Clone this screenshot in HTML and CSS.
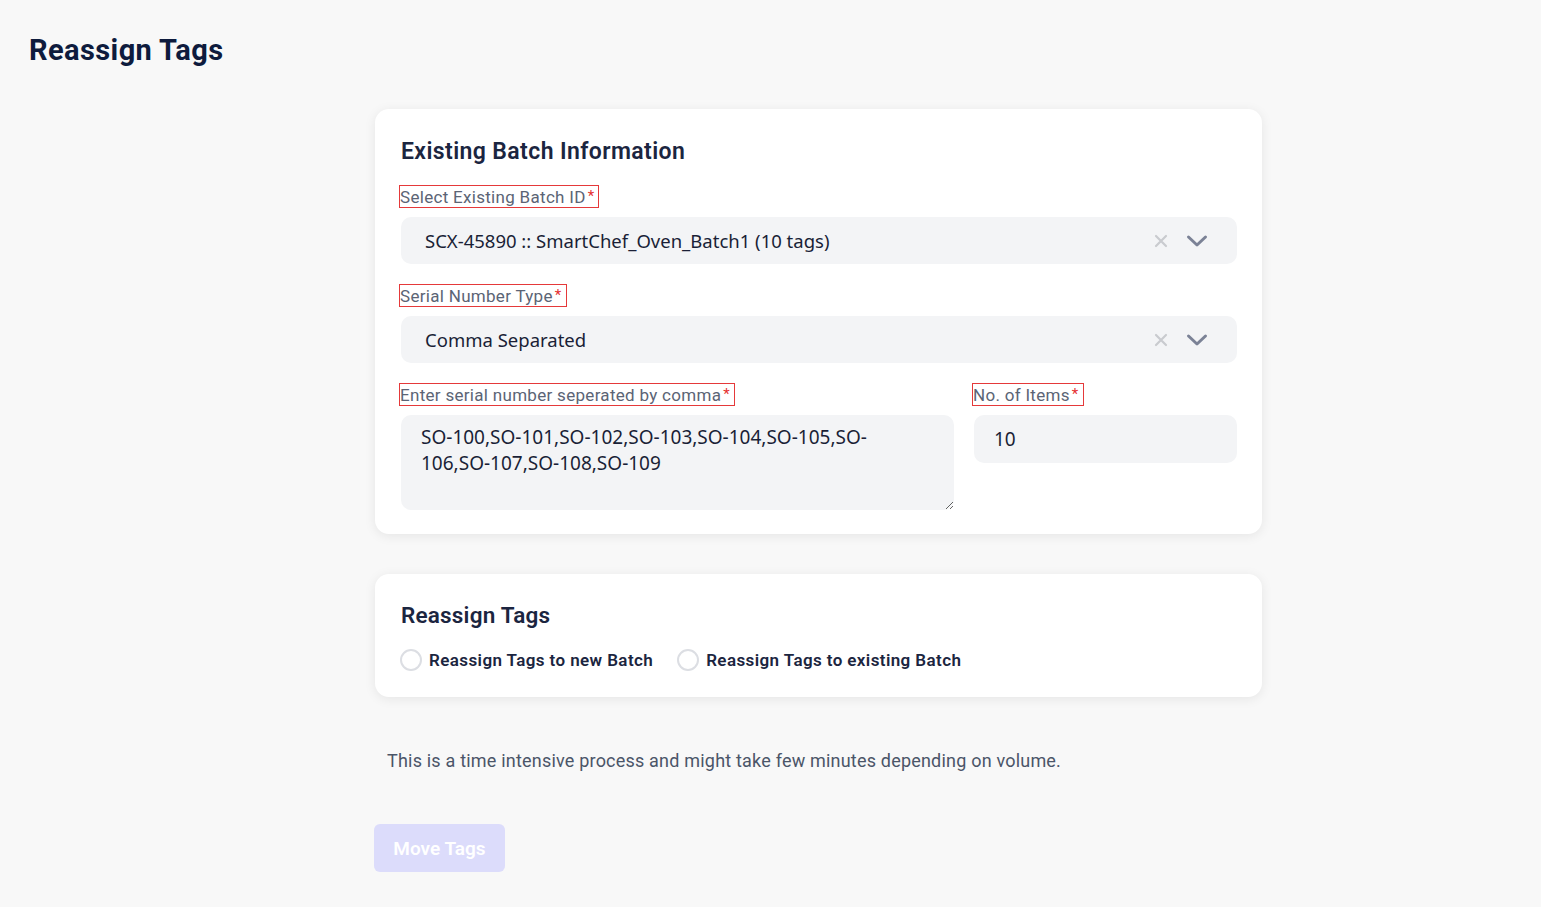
FILE: index.html
```html
<!DOCTYPE html>
<html lang="en">
<head>
    <meta charset="UTF-8">
    <meta name="viewport" content="width=device-width, initial-scale=1.0">
    <title>Reassign Tags</title>
    <link rel="stylesheet" href="styles.css">
</head>
<body>
    <h1 class="page-title">Reassign Tags</h1>

    <div class="content">
        <div class="card">
            <h2>Existing Batch Information</h2>

            <div class="field">
                <label class="field-label">Select Existing Batch ID<span class="req">*</span></label>
                <div class="select">
                    <span class="select-value">SCX-45890 :: SmartChef_Oven_Batch1 (10 tags)</span>
                    <span class="select-icons">
                        <svg class="clear-icon" width="14" height="14" viewBox="0 0 14 14"><path d="M2 2L12 12M12 2L2 12" stroke="#c9cbcf" stroke-width="2.2" stroke-linecap="round"/></svg>
                        <svg class="chevron-icon" width="22" height="14" viewBox="0 0 22 14"><path d="M2.5 3L11 11L19.5 3" fill="none" stroke="#7b8296" stroke-width="3" stroke-linecap="round" stroke-linejoin="round"/></svg>
                    </span>
                </div>
            </div>

            <div class="field">
                <label class="field-label">Serial Number Type<span class="req">*</span></label>
                <div class="select">
                    <span class="select-value">Comma Separated</span>
                    <span class="select-icons">
                        <svg class="clear-icon" width="14" height="14" viewBox="0 0 14 14"><path d="M2 2L12 12M12 2L2 12" stroke="#c9cbcf" stroke-width="2.2" stroke-linecap="round"/></svg>
                        <svg class="chevron-icon" width="22" height="14" viewBox="0 0 22 14"><path d="M2.5 3L11 11L19.5 3" fill="none" stroke="#7b8296" stroke-width="3" stroke-linecap="round" stroke-linejoin="round"/></svg>
                    </span>
                </div>
            </div>

            <div class="field-row">
                <div class="field">
                    <label class="field-label">Enter serial number seperated by comma<span class="req">*</span></label>
                    <textarea class="textarea">SO-100,SO-101,SO-102,SO-103,SO-104,SO-105,SO-106,SO-107,SO-108,SO-109</textarea>
                </div>
                <div class="field">
                    <label class="field-label">No. of Items<span class="req">*</span></label>
                    <input class="input" type="text" value="10">
                </div>
            </div>
        </div>

        <div class="card card-small">
            <h2>Reassign Tags</h2>
            <div class="radio-group">
                <label class="radio"><span class="radio-circle"></span>Reassign Tags to new Batch</label>
                <label class="radio"><span class="radio-circle"></span>Reassign Tags to existing Batch</label>
            </div>
        </div>

        <p class="note">This is a time intensive process and might take few minutes depending on volume.</p>

        <button class="move-btn" disabled>Move Tags</button>
    </div>
</body>
</html>
```

FILE: styles.css
```css
* {
    margin: 0;
    padding: 0;
    box-sizing: border-box;
}

body {
    font-family: Roboto, 'Noto Sans', sans-serif;
    background: #f8f8f8;
    color: #1b2540;
    padding: 30px 29px;
    min-height: 100vh;
}

.page-title {
    font-size: 29px;
    font-weight: 700;
    letter-spacing: 0.4px;
    color: #0e1b3d;
    line-height: 40px;
}

.content {
    width: 887px;
    margin: 39px 0 0 346px;
}

.card {
    background: #fff;
    border-radius: 14px;
    box-shadow: 0 2px 12px rgba(0, 0, 0, 0.08);
    padding: 28px 25px 24px 26px;
}

.card h2 {
    font-size: 23px;
    font-weight: 600;
    letter-spacing: 0.4px;
    color: #1b2540;
    line-height: 30px;
    margin-bottom: 19px;
}

.card-small {
    margin-top: 40px;
    padding-top: 26px;
    padding-bottom: 26px;
}

.card-small h2 {
    font-size: 22.5px;
    letter-spacing: 0.2px;
    margin-bottom: 19px;
}

.field {
    margin-bottom: 21px;
}

.field-label {
    display: inline-block;
    font-size: 17px;
    line-height: 20px;
    letter-spacing: 0.3px;
    color: #5b6475;
    outline: 1px solid #e5393a;
    margin: 0 0 10px -1px;
    padding-right: 4px;
}

.req {
    color: #e53030;
    margin-left: 2px;
    vertical-align: 2px;
    font-size: 15px;
}

.select {
    display: flex;
    align-items: center;
    justify-content: space-between;
    height: 47px;
    background: #f3f4f6;
    border-radius: 10px;
    padding: 0 29px 0 24px;
    font-family: 'Noto Sans', sans-serif;
    font-size: 18.5px;
    color: #1a1f36;
}

.select-icons {
    display: flex;
    align-items: center;
    gap: 18px;
}

.field-row {
    display: grid;
    grid-template-columns: 1fr 263px;
    gap: 20px;
}

.field-row .field {
    margin-bottom: 0;
}

.textarea {
    display: block;
    width: 100%;
    height: 95px;
    background: #f3f4f6;
    border: none;
    border-radius: 10px;
    padding: 9px 20px;
    font-family: 'Noto Sans', sans-serif;
    font-size: 19px;
    line-height: 26px;
    color: #1a1f36;
    resize: vertical;
    outline: none;
}

.input {
    display: block;
    width: 100%;
    height: 48px;
    background: #f3f4f6;
    border: none;
    border-radius: 10px;
    padding: 0 20px;
    font-family: 'Noto Sans', sans-serif;
    font-size: 19px;
    color: #1a1f36;
    outline: none;
}

.radio-group {
    display: flex;
    gap: 25px;
}

.radio {
    display: flex;
    align-items: center;
    gap: 7px;
    font-size: 17px;
    font-weight: 600;
    letter-spacing: 0.4px;
    color: #1b2540;
    margin-left: -1px;
}

.radio-circle {
    width: 22px;
    height: 22px;
    border: 2px solid #dcdee3;
    border-radius: 50%;
    background: #fff;
}

.note {
    font-size: 18px;
    letter-spacing: 0.2px;
    color: #4b5568;
    margin: 53px 0 0 12px;
}

.move-btn {
    margin: 53px 0 0 -1px;
    width: 131px;
    height: 48px;
    background: #dcdcfb;
    color: #fff;
    border: none;
    border-radius: 6px;
    font-family: inherit;
    font-size: 19px;
    font-weight: 600;
}
```
